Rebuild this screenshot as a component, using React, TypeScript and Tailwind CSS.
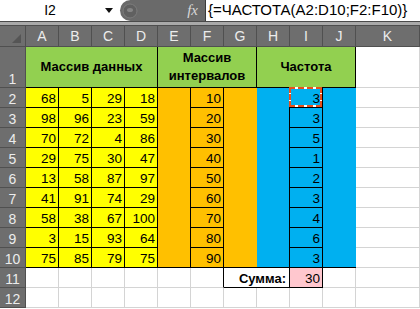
import React from 'react';

const COLS = ['A', 'B', 'C', 'D', 'E', 'F', 'G', 'H', 'I', 'J', 'K'];

const DATA = [
  [68, 5, 29, 18],
  [98, 96, 23, 59],
  [70, 72, 4, 86],
  [29, 75, 30, 47],
  [13, 58, 87, 97],
  [41, 91, 74, 29],
  [58, 38, 67, 100],
  [3, 15, 93, 64],
  [75, 85, 79, 75],
];
const BINS = [10, 20, 30, 40, 50, 60, 70, 80, 90];
const FREQ = [3, 3, 5, 1, 2, 3, 4, 6, 3];

const num = 'flex items-end justify-end pr-[2px] text-[13.5px] leading-4 text-black';
const grid = 'border-r border-b border-[#d4d4d4] bg-white';

const RowHead: React.FC<{ n: number }> = ({ n }) => (
  <div className="flex items-end justify-center border-r border-b border-[#505050] bg-[#6e6e6e] text-[14px] leading-4 text-[#ececec]">
    {n}
  </div>
);

const FormulaBar: React.FC = () => (
  <div className="flex h-[22px] border-b border-[#4a4a4a] bg-white">
    <div className="flex w-[120px] items-center">
      <span className="w-[100px] text-center text-[14px] text-black">I2</span>
      <svg width="8" height="5" viewBox="0 0 8 5" className="ml-[5px]">
        <path d="M0 0h8L4 5z" fill="#111" />
      </svg>
    </div>
    <div className="flex w-[85px] items-center rounded-l-[11px] bg-[#6a6a6a]">
      <svg width="16" height="16" viewBox="0 0 16 16" className="ml-[2px]">
        <circle cx="8" cy="8" r="7" fill="#606060" stroke="#7c7c7c" strokeWidth="1" />
        <ellipse cx="8" cy="7" rx="3" ry="2" fill="#858585" />
      </svg>
      <span className="ml-auto mr-[7px] font-['Liberation_Serif',serif] text-[15px] italic text-[#d8d8d8]">
        fx
      </span>
    </div>
    <div className="flex flex-1 items-center border-l border-[#3a3a3a] pl-[2px] text-[15px] text-black">
      {'{=ЧАСТОТА(A2:D10;F2:F10)}'}
    </div>
  </div>
);

export default function App() {
  return (
    <div className="h-[309px] w-[420px] overflow-hidden bg-white font-['Liberation_Sans',Arial,sans-serif]">
      <FormulaBar />
      <div className="h-[4px] border-b border-[#4e4e4e] bg-[#a9a9a9]" />
      <div className="grid grid-cols-[26px_repeat(10,33px)_64px] grid-rows-[21px_41px_repeat(11,20px)]">
        {/* column headers */}
        <div className="relative border-r border-b border-[#505050] bg-[#6e6e6e]">
          <svg width="9" height="9" viewBox="0 0 9 9" className="absolute bottom-[3px] right-[4px]">
            <path d="M9 0v9H0z" fill="#555" />
          </svg>
        </div>
        {COLS.map((c) => (
          <div
            key={c}
            className="flex items-center justify-center border-r border-b border-[#505050] bg-[#6e6e6e] text-[14px] text-[#ececec]"
          >
            {c}
          </div>
        ))}

        {/* row 1 */}
        <RowHead n={1} />
        <div className="col-span-4 flex items-center justify-center border-r border-b border-black bg-[#92d050] text-[13px] font-bold text-black">
          Массив данных
        </div>
        <div className="col-span-3 flex flex-col items-center justify-center border-r border-b border-black bg-[#92d050] text-[13px] font-bold leading-[18px] text-black">
          <span>Массив</span>
          <span>интервалов</span>
        </div>
        <div className="col-span-3 flex items-center justify-center border-r border-b border-black bg-[#92d050] text-[13px] font-bold text-black">
          Частота
        </div>
        <div className={grid} />

        {/* rows 2-10 */}
        {DATA.map((row, i) => {
          const last = i === DATA.length - 1;
          return (
            <React.Fragment key={i}>
              <RowHead n={i + 2} />
              {row.map((v, j) => (
                <div key={j} className={`${num} border-r border-b border-black bg-[#ffff00]`}>
                  {v}
                </div>
              ))}
              <div className={`border-r border-black bg-[#ffc000] ${last ? 'border-b' : ''}`} />
              <div className={`${num} border-r border-b border-black bg-[#ffc000]`}>{BINS[i]}</div>
              <div className={`bg-[#ffc000] ${last ? 'border-b border-black' : ''}`} />
              <div className={`border-r border-black bg-[#00b0f0] ${last ? 'border-b' : ''}`} />
              <div className={`${num} relative border-r border-b border-black bg-[#00b0f0]`}>
                {i === 0 && (
                  <>
                    <div className="absolute -left-px -top-px bottom-0 right-0 border-2 border-white" />
                    <div className="absolute -left-px -top-px bottom-0 right-0 border-2 border-dashed border-[#e8501c]" />
                  </>
                )}
                <span className="relative">{FREQ[i]}</span>
              </div>
              <div className={`bg-[#00b0f0] ${last ? 'border-b border-black' : ''}`} />
              <div className={grid} />
            </React.Fragment>
          );
        })}

        {/* row 11 */}
        <RowHead n={11} />
        <div className={grid} />
        <div className={grid} />
        <div className={grid} />
        <div className={grid} />
        <div className={grid} />
        <div className="border-r border-b border-r-black border-b-[#d4d4d4] bg-white" />
        <div className="col-span-2 flex items-end justify-end border-r border-b border-black bg-white pr-[3px] text-[13px] font-bold leading-4 text-black">
          Сумма:
        </div>
        <div className={`${num} border-r border-b border-black bg-[#ffc7ce] text-[#c0182a]`}>30</div>
        <div className={grid} />
        <div className={grid} />

        {/* row 12 */}
        <RowHead n={12} />
        {COLS.map((c) => (
          <div key={c} className={grid} />
        ))}
      </div>
    </div>
  );
}
